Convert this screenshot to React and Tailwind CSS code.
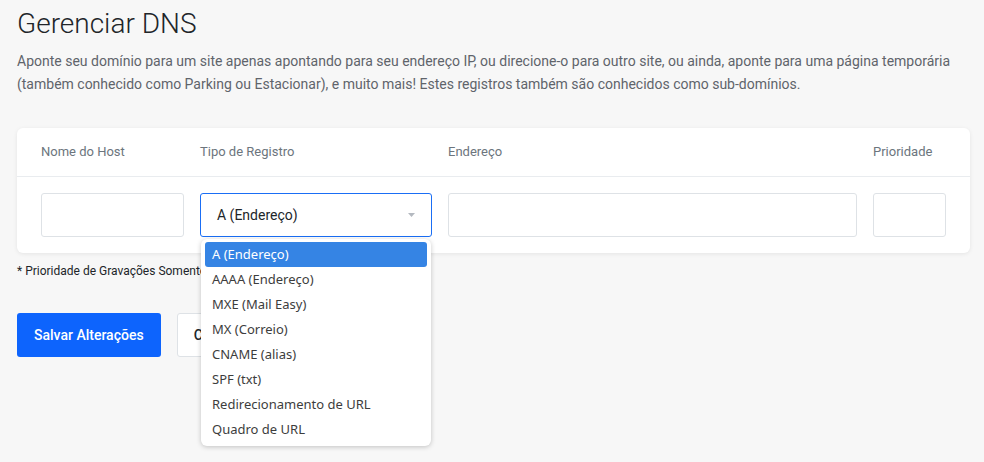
import React, { useState } from 'react';

const tipos = [
  'A (Endereço)',
  'AAAA (Endereço)',
  'MXE (Mail Easy)',
  'MX (Correio)',
  'CNAME (alias)',
  'SPF (txt)',
  'Redirecionamento de URL',
  'Quadro de URL'
];

const App = () => {
  const [tipo, setTipo] = useState(tipos[0]);

  return (
    <div className="min-h-[462px] bg-[#f7f7f7] pl-[17px] pr-[14px] pt-[7px] font-['Roboto',sans-serif] text-[#212529]">
      <h1 className="text-[28px] font-light leading-[34px]">Gerenciar DNS</h1>
      <p className="mt-[9px] pr-[3px] text-[14px] leading-[23px] text-[#5f646b]">
        Aponte seu domínio para um site apenas apontando para seu endereço IP, ou direcione-o para outro site, ou ainda, aponte para uma página temporária (também conhecido como Parking ou Estacionar), e muito mais! Estes registros também são conhecidos como sub-domínios.
      </p>

      <div className="mt-[32px] rounded-[6px] bg-white shadow-[0_1px_4px_rgba(0,0,0,0.08)]">
        <div className="flex h-[49px] items-center gap-4 border-b border-[#e9ecef] px-6 text-[13px] text-[#6c757d]">
          <div className="w-[143px]">Nome do Host</div>
          <div className="w-[232px]">Tipo de Registro</div>
          <div className="flex-1">Endereço</div>
          <div className="w-[73px]">Prioridade</div>
        </div>
        <div className="flex gap-4 px-6 py-4">
          <input className="h-[44px] w-[143px] rounded-[3px] border border-[#dee2e6] bg-white" />
          <div className="relative w-[232px]">
            <div className="flex h-[44px] items-center justify-between rounded-[3px] border border-[#1a6ef5] bg-white pl-4 pr-[16px] text-[14px]">
              <span>{tipo}</span>
              <svg width="7" height="4" viewBox="0 0 7 4">
                <path d="M0 0h7L3.5 4z" fill="#b4b9c0" />
              </svg>
            </div>
            <ul className="absolute left-px top-[46px] z-10 w-[230px] rounded-[6px] bg-white px-1 pt-[3px] pb-[4px] font-['Noto_Sans',sans-serif] text-[13px] text-[#3d3d3d] shadow-[0_1px_5px_rgba(0,0,0,0.22)]">
              {tipos.map((t) => (
                <li
                  key={t}
                  onClick={() => setTipo(t)}
                  className={`flex h-[25px] items-center rounded-[3px] px-[7px] ${
                    t === tipo ? 'bg-[#3584e4] text-white' : ''
                  }`}
                >
                  {t}
                </li>
              ))}
            </ul>
          </div>
          <input className="h-[44px] flex-1 rounded-[3px] border border-[#dee2e6] bg-white" />
          <input className="h-[44px] w-[73px] rounded-[3px] border border-[#dee2e6] bg-white" />
        </div>
      </div>

      <p className="mt-[9px] text-[12px] leading-[18px] text-[#212529]">
        * Prioridade de Gravações Somente para registros MX
      </p>

      <div className="mt-[33px] flex gap-4">
        <button className="h-[44px] rounded-[3px] bg-[#0d64fd] px-[17px] text-[14px] font-medium text-white">
          Salvar Alterações
        </button>
        <button className="h-[44px] rounded-[3px] border border-[#dee2e6] bg-white px-4 text-[14px] font-medium text-[#212529]">
          Cancelar
        </button>
      </div>
    </div>
  );
};

export default App;
